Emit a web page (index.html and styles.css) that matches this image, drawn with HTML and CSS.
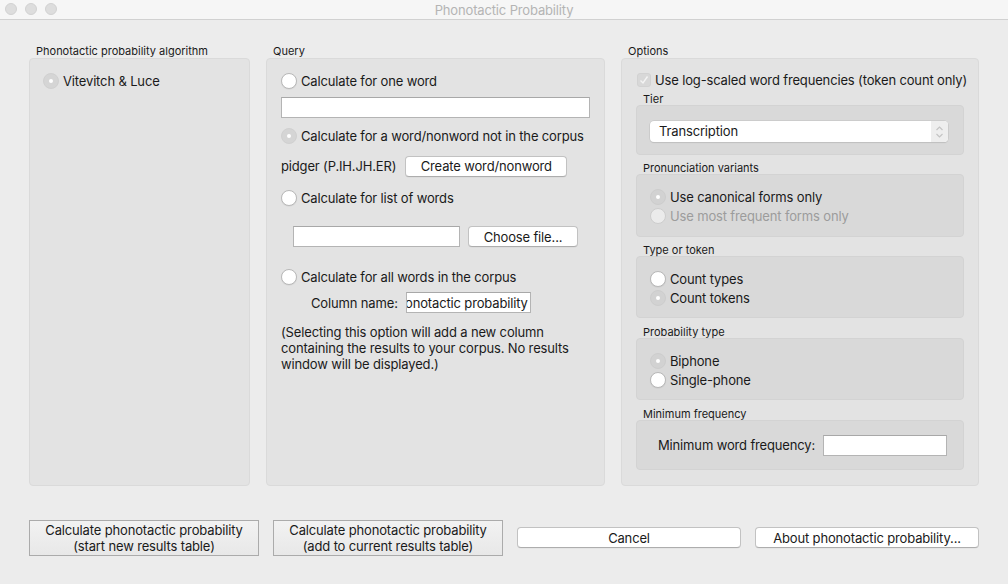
FILE: index.html
```html
<!DOCTYPE html>
<html>
<head>
<meta charset="utf-8">
<link rel="stylesheet" href="styles.css">
</head>
<body>
<div class="window">
  <div class="titlebar">
    <div class="lights"><span class="light"></span><span class="light"></span><span class="light"></span></div>
    <div class="title">Phonotactic Probability</div>
  </div>
  <div class="content">
    <div class="groups">
      <div class="group g-algo">
        <div class="glabel">Phonotactic probability algorithm</div>
        <div class="gbox algo-box">
          <div class="row r-algo"><span class="radio sel-dis"></span><span>Vitevitch &amp; Luce</span></div>
        </div>
      </div>
      <div class="group g-query">
        <div class="glabel">Query</div>
        <div class="gbox query-box">
          <div class="row q1"><span class="radio"></span><span>Calculate for one word</span></div>
          <div class="input q-word"></div>
          <div class="row q3"><span class="radio sel-dis"></span><span>Calculate for a word/nonword not in the corpus</span></div>
          <div class="row q4"><span class="pidger">pidger (P.IH.JH.ER)</span><button class="btn-round b-create">Create word/nonword</button></div>
          <div class="row q5"><span class="radio"></span><span>Calculate for list of words</span></div>
          <div class="row q6"><div class="input q-file"></div><button class="btn-round b-choose">Choose file...</button></div>
          <div class="row q7"><span class="radio"></span><span>Calculate for all words in the corpus</span></div>
          <div class="row q8"><span class="colname">Column name:</span><div class="input q-col"><span class="scrolltext">Phonotactic probability</span></div></div>
          <p class="note">(Selecting this option will add a new column containing the results to your corpus. No results window will be displayed.)</p>
        </div>
      </div>
      <div class="group g-opts">
        <div class="glabel">Options</div>
        <div class="gbox opts-box">
          <div class="row o-check"><span class="checkbox"><svg width="12" height="12" viewBox="0 0 12 12"><path d="M2.5 6.5 L5 9 L9.5 2.5" fill="none" stroke="#f4f4f4" stroke-width="1.4"/></svg></span><span>Use log-scaled word frequencies (token count only)</span></div>
          <div class="slabel l-tier">Tier</div>
          <div class="sbox tier-box">
            <div class="select"><span class="sel-text">Transcription</span><span class="sel-arrows"><svg width="9" height="14" viewBox="0 0 9 14"><path d="M1.5 5 L4.5 2 L7.5 5 M1.5 9 L4.5 12 L7.5 9" fill="none" stroke="#c4c4c4" stroke-width="1.2"/></svg></span></div>
          </div>
          <div class="slabel l-pron">Pronunciation variants</div>
          <div class="sbox radio-box b-pron">
            <div class="row orow"><span class="radio sel-dis"></span><span>Use canonical forms only</span></div>
            <div class="row orow disabled"><span class="radio dis"></span><span>Use most frequent forms only</span></div>
          </div>
          <div class="slabel l-type">Type or token</div>
          <div class="sbox radio-box">
            <div class="row orow"><span class="radio"></span><span>Count types</span></div>
            <div class="row orow"><span class="radio sel-dis"></span><span>Count tokens</span></div>
          </div>
          <div class="slabel l-prob">Probability type</div>
          <div class="sbox radio-box">
            <div class="row orow"><span class="radio sel-dis"></span><span>Biphone</span></div>
            <div class="row orow"><span class="radio"></span><span>Single-phone</span></div>
          </div>
          <div class="slabel l-min">Minimum frequency</div>
          <div class="sbox minfreq-box">
            <span class="mf-label">Minimum word frequency:</span><div class="input mf-input"></div>
          </div>
        </div>
      </div>
    </div>
    <div class="actions">
      <button class="btn-square b-new">Calculate phonotactic probability<br>(start new results table)</button>
      <button class="btn-square b-add">Calculate phonotactic probability<br>(add to current results table)</button>
      <button class="btn-round b-cancel">Cancel</button>
      <button class="btn-round b-about">About phonotactic probability...</button>
    </div>
  </div>
</div>
</body>
</html>
```

FILE: styles.css
```css
* { box-sizing: border-box; }
html, body { margin: 0; padding: 0; }
body {
  width: 1008px;
  height: 584px;
  overflow: hidden;
  font-family: Inter, "Liberation Sans", Arial, sans-serif;
  font-size: 13px;
  letter-spacing: -0.15px;
  color: #1a1a1a;
  background: #ececec;
}
.window { width: 1008px; height: 584px; display: flex; flex-direction: column; }
.titlebar {
  height: 20px;
  background: #f6f6f6;
  border-bottom: 1px solid #d1d1d1;
  position: relative;
  display: flex;
  align-items: center;
  justify-content: center;
}
.lights { position: absolute; left: 5px; top: 3px; display: flex; gap: 8px; }
.light {
  width: 12px; height: 12px; border-radius: 50%;
  background: #dddddd; border: 1px solid #d2d2d2;
}
.title { color: #b4b4b4; font-size: 13px; padding-top: 1px; }

.content { flex: 1; padding: 25px 0 0 29px; }
.groups { display: flex; gap: 16px; align-items: flex-start; }
.group { display: flex; flex-direction: column; }
.glabel { font-size: 11px; letter-spacing: 0; line-height: 13px; height: 13px; padding-left: 7px; color: #1a1a1a; white-space: nowrap; }
.gbox {
  height: 428px;
  background: #e3e3e3;
  border: 1px solid #dadada;
  border-radius: 4px;
}
.g-algo { width: 221px; }
.g-query { width: 339px; }
.g-opts { width: 358px; }

.row { display: flex; align-items: center; white-space: nowrap; }
.radio {
  width: 16px; height: 16px; border-radius: 50%;
  background: #fff;
  border: 1px solid #b8b8b8;
  box-shadow: 0 0.5px 1px rgba(0,0,0,0.08);
  margin-right: 4px;
  flex: none;
  position: relative;
}
.radio.sel-dis { background: #d5d5d5; border-color: #d0d0d0; box-shadow: none; }
.radio.sel-dis::after {
  content: ""; position: absolute; left: 5px; top: 5px;
  width: 4px; height: 4px; border-radius: 50%; background: #fff;
}
.radio.dis { background: #ebebeb; border-color: #cdcdcd; box-shadow: none; }
.disabled { color: #9c9c9c; }

.algo-box { padding: 12px 0 0 13px; }
.r-algo { height: 20px; }

.query-box { padding: 12px 0 0 14px; }
.q1 { height: 20px; }
.input {
  background: #fff;
  border: 1px solid #b4b4b4;
  border-top-color: #a8a8a8;
  height: 21px;
}
.q-word { width: 309px; margin-top: 6px; }
.q3 { height: 20px; margin-top: 8px; }
.q4 { height: 22px; margin-top: 9px; }
.pidger { margin-right: 9px; }
.btn-round {
  font-family: inherit;
  font-size: 13px;
  letter-spacing: -0.15px;
  color: #1a1a1a;
  background: #fff;
  border: 1px solid #c2c2c2;
  border-bottom-color: #adadad;
  border-radius: 4px;
  height: 21px;
  padding: 0;
  box-shadow: 0 0.5px 0.5px rgba(0,0,0,0.06);
}
.b-create { width: 162px; }
.q5 { height: 20px; margin-top: 11px; }
.q6 { height: 21px; margin-top: 18px; padding-left: 12px; }
.q-file { width: 167px; }
.b-choose { width: 110px; margin-left: 8px; }
.q7 { height: 20px; margin-top: 20px; }
.q8 { height: 21px; margin-top: 5px; padding-left: 30px; }
.colname { margin-right: 8px; }
.q-col { width: 125px; overflow: hidden; position: relative; }
.scrolltext { position: absolute; right: 2px; top: 2px; white-space: nowrap; }
.note { margin: 11px 0 0 0; line-height: 16px; width: 310px; }

.opts-box { padding: 11px 14px 0 14px; }
.o-check { height: 20px; }
.checkbox {
  width: 14px; height: 14px; border-radius: 3px;
  background: #d8d8d8; border: 1px solid #d2d2d2;
  margin-right: 4px; margin-left: 1px;
  display: flex; align-items: center; justify-content: center;
}
.slabel { font-size: 11px; letter-spacing: 0; line-height: 13px; height: 13px; padding: 1px 0 0 7px; white-space: nowrap; }
.l-tier { margin-top: 2px; }
.l-pron { margin-top: 6px; }
.l-type { margin-top: 6px; }
.l-prob { margin-top: 7px; }
.l-min { margin-top: 7px; }
.sbox {
  background: #d9d9d9;
  border: 1px solid #d3d3d3;
  border-radius: 4px;
}
.tier-box { height: 50px; padding: 15px 15px 0 13px; }
.select {
  height: 21px;
  display: flex;
  background: #fff;
  border-radius: 4px;
  box-shadow: 0 0 0 0.5px #c0c0c0, 0 1px 1px rgba(0,0,0,0.12);
  overflow: hidden;
}
.sel-text { flex: 1; padding-left: 9px; line-height: 21px; }
.sel-arrows {
  width: 17px; background: #eeeeee;
  display: flex; align-items: center; justify-content: center;
}
.radio-box { height: 62px; padding: 12px 0 0 13px; }
.radio-box .radio.sel-dis { background: #d2d2d2; border-color: #cdcdcd; }
.b-pron { height: 63px; }
.orow { height: 19px; }
.minfreq-box { height: 50px; padding: 0 0 0 21px; display: flex; align-items: center; }
.mf-label { margin-right: 8px; }
.mf-input { width: 124px; height: 21px; }

.actions { display: flex; align-items: center; margin-top: 34px; height: 35px; }
.btn-square {
  font-family: inherit;
  font-size: 13px;
  letter-spacing: -0.15px;
  color: #1a1a1a;
  height: 36px;
  width: 230px;
  padding: 0;
  line-height: 16px;
  border: 1px solid #ababab;
  border-radius: 0;
  background: linear-gradient(#f2f2f2, #e8e8e8);
}
.b-add { margin-left: 14px; }
.b-cancel { width: 224px; margin-left: 14px; }
.b-about { width: 224px; margin-left: 14px; }
```
